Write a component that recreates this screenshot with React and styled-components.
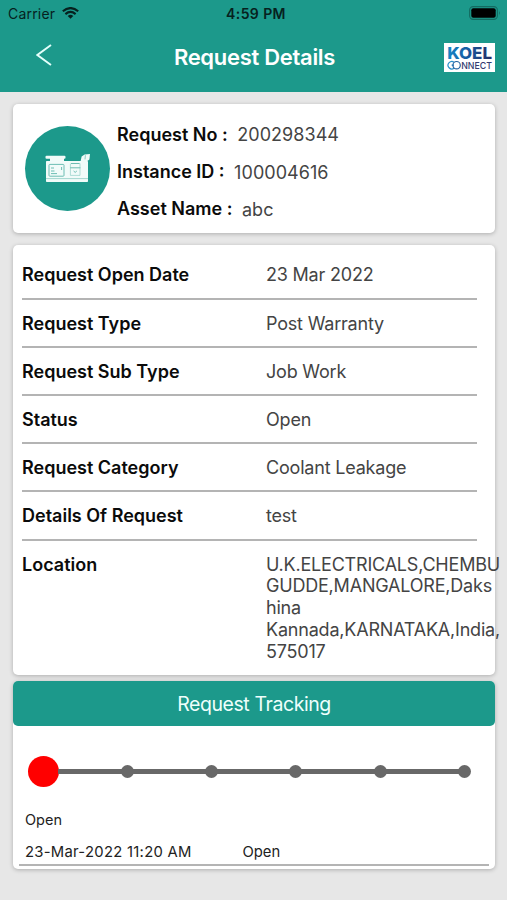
import React from 'react'
import styled, { createGlobalStyle } from 'styled-components'

const GlobalStyle = createGlobalStyle`
    *{
        box-sizing: border-box;
    }

    body{
        margin: 0;
        background-color: #e7e7e7;
        font-family: Inter, "Liberation Sans", sans-serif;
    }
`

const Wrapper = styled.div`
    width: 507px;
    height: 900px;
    overflow: hidden;
    background-color: #e7e7e7;
`

const Header = styled.header`
    height: 92px;
    background-color: #1c998b;
`

const StatusBar = styled.div`
    height: 28px;
    padding: 0 6px 2px 8px;
    display: grid;
    grid-template-columns: 1fr auto 1fr;
    align-items: center;
    color: #06211e;
`

const Carrier = styled.div`
    display: flex;
    align-items: center;
    gap: 7px;
    font-size: 14px;
    letter-spacing: 0.2px;
`

const Clock = styled.div`
    padding-left: 3px;
    font-size: 14px;
    font-weight: 600;
    letter-spacing: 0.4px;
`

const Battery = styled.svg`
    justify-self: end;
`

const NavBar = styled.div`
    height: 58px;
    padding: 0 12px 0 36px;
    display: grid;
    grid-template-columns: 127px 183px 1fr;
    align-items: center;
`

const BackIcon = styled.svg`
    display: block;
    margin-top: -4px;
`

const Title = styled.h1`
    margin: 0;
    color: white;
    font-size: 22px;
    font-weight: 600;
    letter-spacing: -0.3px;
    text-align: center;
`

const Logo = styled.svg`
    justify-self: end;
`

const Card = styled.section`
    width: 482px;
    height: ${props => props.$height}px;
    margin: ${props => props.$top}px 0 0 13px;
    background-color: white;
    border-radius: 5px;
    box-shadow: 0 1px 4px rgba(0, 0, 0, 0.25);
`

const SummaryCard = styled(Card)`
    display: flex;
    align-items: center;
    padding-left: 12px;
`

const AssetBadge = styled.div`
    width: 85px;
    height: 85px;
    border-radius: 50%;
    background-color: #1c998b;
    display: flex;
    align-items: center;
    justify-content: center;
`

const SummaryList = styled.div`
    margin-left: 7px;
    padding-top: 7px;
    display: grid;
    grid-auto-rows: 37.3px;
`

const SummaryItem = styled.div`
    display: flex;
    align-items: center;
    gap: 9.5px;
`

const Label = styled.div`
    color: #0b0b0b;
    font-size: 18px;
    font-weight: 600;
    line-height: 22px;
    white-space: nowrap;
`

const Value = styled.div`
    color: #444;
    font-size: 18px;
    line-height: 21.8px;
    letter-spacing: -0.2px;
    white-space: pre;
`

const SummaryValue = styled(Value)`
    padding-top: 1px;
    letter-spacing: 0.05px;
`

const DetailsCard = styled(Card)`
    padding: 6.4px 18px 0 9px;
`

const DetailRow = styled.div`
    height: 48.2px;
    padding-top: 13.1px;
    display: grid;
    grid-template-columns: 244px 1fr;
    border-bottom: 2px solid #b4b4b4;

    &:last-child{
        border-bottom: none;
    }
`

const Banner = styled.div`
    height: 45px;
    border-radius: 5px;
    background-color: #1c998b;
    color: #eefffc;
    display: flex;
    align-items: center;
    justify-content: center;
    font-size: 19.5px;
    letter-spacing: -0.42px;
`

const Stepper = styled.div`
    height: 91px;
    padding: 0 24px 0 15px;
    display: flex;
    align-items: center;
`

const ActiveStep = styled.div`
    width: 31px;
    height: 31px;
    border-radius: 50%;
    background-color: #ff0000;
`

const Step = styled.div`
    width: 13px;
    height: 13px;
    border-radius: 50%;
    background-color: #686868;
`

const StepLine = styled.div`
    flex: ${props => props.$grow};
    height: 5px;
    margin: 0 -1px;
    background-color: #686868;
`

const StepName = styled.div`
    padding-left: 12px;
    color: #222;
    font-size: 14.5px;
    line-height: 20px;
    margin-top: -7px;
`

const HistoryRow = styled.div`
    height: 36px;
    margin: 0 6px;
    padding: 0 0 2px 6px;
    display: grid;
    grid-template-columns: 217.5px 1fr;
    align-items: end;
    border-bottom: 2px solid #b4b4b4;
    color: #222;
    font-size: 14.8px;
    line-height: 20px;
`

const HistoryDate = styled.div`
    letter-spacing: 0.29px;
`

const summary = [
    { label: "Request No :", value: "200298344" },
    { label: "Instance ID :", value: "100004616" },
    { label: "Asset Name :", value: "abc" },
]

const details = [
    { label: "Request Open Date", value: "23 Mar 2022" },
    { label: "Request Type", value: "Post Warranty" },
    { label: "Request Sub Type", value: "Job Work" },
    { label: "Status", value: "Open" },
    { label: "Request Category", value: "Coolant Leakage" },
    { label: "Details Of Request", value: "test" },
    {
        label: "Location",
        value: "U.K.ELECTRICALS,CHEMBU\nGUDDE,MANGALORE,Daks\nhina\nKannada,KARNATAKA,India,\n575017",
    },
]

const WifiIcon = () => (
    <svg width="17" height="12" viewBox="0 0 17 12">
        <g fill="none" stroke="#06211e" strokeWidth="2.1">
            <path d="M0.8 4.3 Q8.5 -2.2 16.2 4.3" />
            <path d="M3.4 7.1 Q8.5 2.8 13.6 7.1" />
        </g>
        <path d="M5.7 8.9 Q8.5 6.7 11.3 8.9 L8.5 11.8 Z" fill="#06211e" />
    </svg>
)

const BatteryIcon = () => (
    <Battery width="32" height="14" viewBox="0 0 32 14">
        <rect x="0.6" y="0.6" width="27.8" height="12.8" rx="3.6" fill="none" stroke="#136b61" strokeWidth="1.1" />
        <rect x="2.3" y="2.3" width="24.4" height="9.4" rx="2" fill="#000" />
        <path d="M30 4.8 Q31.6 7 30 9.2 Z" fill="#136b61" />
    </Battery>
)

const KoelLogo = () => (
    <Logo width="51" height="29" viewBox="0 0 51 29">
        <defs>
            <linearGradient id="koel" x1="0" x2="1">
                <stop offset="0" stopColor="#1587c9" />
                <stop offset="0.5" stopColor="#17569b" />
                <stop offset="1" stopColor="#262c63" />
            </linearGradient>
        </defs>
        <rect width="51" height="29" fill="#fff" />
        <text x="3.2" y="16" textLength="44.8" lengthAdjust="spacingAndGlyphs" fontFamily="Inter" fontWeight="800" fontSize="16" fill="url(#koel)">KOEL</text>
        <g fill="none" strokeWidth="1.2">
            <path d="M10.2 19.4 A3.7 3.7 0 1 0 10.2 25 M7.6 22.2 H10" stroke="#2a8fca" />
            <circle cx="12.6" cy="22.2" r="3.7" stroke="#22609f" />
        </g>
        <text x="17.2" y="25.7" textLength="30.8" lengthAdjust="spacingAndGlyphs" fontFamily="Inter" fontWeight="500" fontSize="9.6" fill="#333b70">NNECT</text>
    </Logo>
)

const GeneratorIcon = () => (
    <svg width="46" height="30" viewBox="0 0 46 30">
        <g fill="#f1fbf9">
            <rect x="0.5" y="1.8" width="20" height="3" rx="1" />
            <rect x="5" y="4" width="14" height="4" />
            <rect x="1" y="7" width="42" height="21" rx="0.8" />
            <path d="M35.6 7.2 L36.6 2.6 L39.6 0.6 L45 0 L44.4 5.4 L42 7.2 Z" />
        </g>
        <g fill="none" stroke="#6dbdb3" strokeWidth="1">
            <rect x="4" y="10.4" width="15" height="11.8" rx="0.8" />
            <path d="M6 14 H9 M6 17 H9.5 M6 19.6 H12 M16.6 13 V16" />
            <path d="M26 9.5 H34.6 M25.2 13.8 H35.4" />
            <path d="M28.6 17 L30.2 18.4 L31.8 17" />
            <path d="M25.4 9.5 V21.4 H35 V9.5" strokeWidth="0.5" />
            <path d="M1 24.6 H43" strokeWidth="0.6" />
            <path d="M40.4 1.2 L40 5.4" strokeWidth="0.8" />
        </g>
    </svg>
)

const App = () => {
    return (
        <>
            <GlobalStyle />
            <Wrapper>
                <Header>
                    <StatusBar>
                        <Carrier>
                            Carrier
                            <WifiIcon />
                        </Carrier>
                        <Clock>4:59 PM</Clock>
                        <BatteryIcon />
                    </StatusBar>
                    <NavBar>
                        <BackIcon width="16" height="22" viewBox="0 0 16 22">
                            <path d="M15 1 L1.4 11 L15 21" fill="none" stroke="#e4fffb" strokeWidth="1.9" />
                        </BackIcon>
                        <Title>Request Details</Title>
                        <KoelLogo />
                    </NavBar>
                </Header>

                <SummaryCard $top={12} $height={129}>
                    <AssetBadge>
                        <GeneratorIcon />
                    </AssetBadge>
                    <SummaryList>
                        {summary.map((item) => (
                            <SummaryItem key={item.label}>
                                <Label>{item.label}</Label>
                                <SummaryValue>{item.value}</SummaryValue>
                            </SummaryItem>
                        ))}
                    </SummaryList>
                </SummaryCard>

                <DetailsCard $top={12} $height={430}>
                    {details.map((item) => (
                        <DetailRow key={item.label}>
                            <Label>{item.label}</Label>
                            <Value>{item.value}</Value>
                        </DetailRow>
                    ))}
                </DetailsCard>

                <Card $top={6} $height={188}>
                    <Banner>Request Tracking</Banner>
                    <Stepper>
                        <ActiveStep />
                        {[0, 1, 2, 3, 4].map((step) => (
                            <React.Fragment key={step}>
                                <StepLine $grow={step === 0 ? 62 : 71} />
                                <Step />
                            </React.Fragment>
                        ))}
                    </Stepper>
                    <StepName>Open</StepName>
                    <HistoryRow>
                        <HistoryDate>23-Mar-2022 11:20 AM</HistoryDate>
                        <div>Open</div>
                    </HistoryRow>
                </Card>
            </Wrapper>
        </>
    )
}

export default App
